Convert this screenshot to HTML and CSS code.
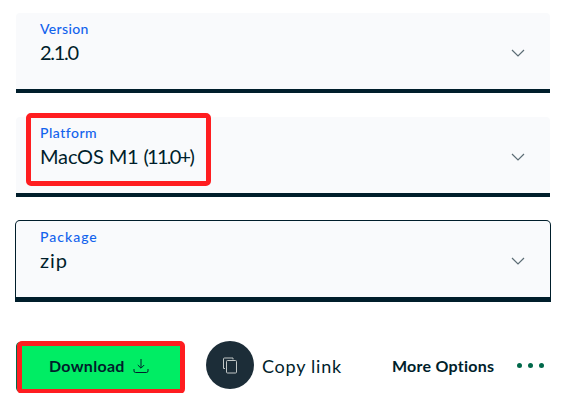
FILE: index.html
```html
<!DOCTYPE html>
<html lang="en">
<head>
<meta charset="utf-8">
<title>Download</title>
<link rel="stylesheet" href="styles.css">
</head>
<body>
<main class="panel">
  <div class="field">
    <div class="text"><span class="label version">Version</span><span class="value number">2.1.0</span></div>
    <svg class="chevron" viewBox="0 0 14 8"><path d="M1 1l6 6 6-6"/></svg>
  </div>
  <div class="field">
    <div class="text"><span class="label platform">Platform</span><span class="value os">MacOS M1 <span class="release">(11.0+)</span></span></div>
    <svg class="chevron" viewBox="0 0 14 8"><path d="M1 1l6 6 6-6"/></svg>
    <div class="highlight field-highlight"></div>
  </div>
  <div class="field active">
    <div class="text"><span class="label package">Package</span><span class="value zip">zip</span></div>
    <svg class="chevron" viewBox="0 0 14 8"><path d="M1 1l6 6 6-6"/></svg>
  </div>
  <div class="actions">
    <div class="download">
      <span class="download-text">Download</span>
      <svg class="download-icon" viewBox="0 0 16 16"><path d="M8 1v9M4.800 7L8 10.200 11.200 7M1 11V13q0 1.500 1.500 1.500h11Q15 14.500 15 13v-2"/></svg>
      <div class="highlight button-highlight"></div>
    </div>
    <div class="copy">
      <span class="copy-circle"><svg class="copy-icon" viewBox="0 0 16 17"><path d="M1.500 11.500V2q0-1 1-1h8.500v1.500M1.500 11.500H3"/><rect x="4.500" y="3.500" width="10" height="12.500" rx="1"/></svg></span>
      <span class="copy-text">Copy link</span>
    </div>
    <div class="more">
      <span class="more-text">More Options</span>
      <span class="dots"><i></i><i></i><i></i></span>
    </div>
  </div>
</main>
</body>
</html>
```
FILE: styles.css
```css
* { box-sizing: border-box; }
body { margin: 0; background: #fff; color: #001e2b; font-family: Lato, sans-serif; }
.panel { width: 577px; padding: 13px 27px 0 16px; }
.field {
  position: relative;
  display: flex;
  justify-content: space-between;
  align-items: center;
  height: 80px;
  margin-bottom: 24px;
  padding: 0 25px 0 24px;
  background: #f9fafc;
  border-bottom: 4px solid #001e2b;
  border-radius: 4px 4px 0 0;
}
.field.active {
  height: 82px;
  margin: -1px -1px 38px;
  border: 1px solid #001e2b;
  border-bottom-width: 5px;
  border-radius: 5px 5px 0 0;
}
.text { display: flex; flex-direction: column; align-self: flex-start; padding-top: 7px; white-space: nowrap; }
.label { color: #1263ed; font-size: 14px; line-height: 18px; font-weight: 500; }
.value { font-size: 20px; line-height: 28px; }
.version { letter-spacing: .35px; }
.platform { letter-spacing: .5px; }
.package { letter-spacing: 1px; }
.number { letter-spacing: -1.3px; }
.os { letter-spacing: -.15px; }
.release { letter-spacing: -1.75px; }
.zip { letter-spacing: .9px; }
.chevron { width: 14px; height: 8px; margin-top: 3px; fill: none; stroke: #5c6c75; stroke-width: 1.2; }
.highlight { position: absolute; border: 5px solid #ff1d20; }
.field-highlight { left: 10px; top: -4px; width: 185px; height: 73px; border-radius: 5px; }
.actions { display: flex; align-items: center; height: 53px; }
.download {
  position: relative;
  display: flex;
  align-items: center;
  width: 168px;
  height: 50px;
  padding: 0 0 2px 32px;
  background: #00ed64;
  border: 1px solid #00684a;
  border-radius: 4px;
}
.button-highlight { left: 0; top: -2px; width: 168px; height: 53px; border-radius: 5px; }
.download-text, .more-text { font-size: 16px; font-weight: 700; line-height: 22px; }
.download-text { width: 76px; letter-spacing: .3px; }
.download-icon { width: 16px; height: 16px; margin-left: 8px; fill: none; stroke: #001e2b; stroke-width: 1; }
.copy { display: flex; align-items: center; margin-left: 22px; gap: 8px; margin-top: -3px; }
.copy-circle { display: grid; place-items: center; width: 48px; height: 48px; border-radius: 50%; background: #1c2d38; }
.copy-icon { width: 16px; height: 17px; fill: none; stroke: #c1c7c6; stroke-width: 1; }
.copy-text { width: 80px; font-size: 18px; line-height: 24px; letter-spacing: .75px; white-space: nowrap; padding-top: 1px; }
.more { display: flex; align-items: center; margin: -2px 6px 0 auto; }
.more-text { width: 102px; margin-right: 23px; letter-spacing: .25px; white-space: nowrap; }
.dots { display: flex; gap: 6px; }
.dots i { width: 5px; height: 5px; border-radius: 50%; background: #00684a; }
```
